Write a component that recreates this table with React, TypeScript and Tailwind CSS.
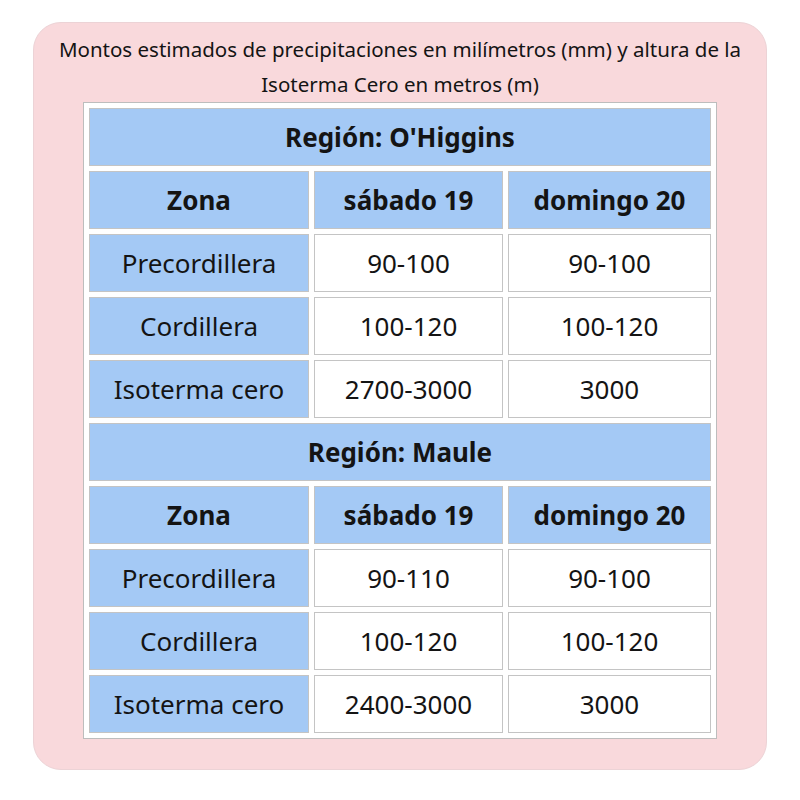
const regions = [
  {
    name: "O'Higgins",
    rows: [
      ['Precordillera', '90-100', '90-100'],
      ['Cordillera', '100-120', '100-120'],
      ['Isoterma cero', '2700-3000', '3000'],
    ],
  },
  {
    name: 'Maule',
    rows: [
      ['Precordillera', '90-110', '90-100'],
      ['Cordillera', '100-120', '100-120'],
      ['Isoterma cero', '2400-3000', '3000'],
    ],
  },
]

const cell = 'h-[58px] border border-[#c4c4c4] p-0 text-center align-middle'

export default function App() {
  return (
    <div className="min-h-[800px] w-[800px] bg-white pt-[22px] font-['Noto_Sans',sans-serif] text-[#141414]">
      <div className="mx-[33px] h-[748px] rounded-[28px] border border-[#ecd3d6] bg-[#f9d9dc] px-[49px] pt-[9px]">
        <p className="-mx-[40px] text-center text-[20.5px] leading-[35px]">
          Montos estimados de precipitaciones en milímetros (mm) y altura de la
          <br />
          Isoterma Cero en metros (m)
        </p>
        <table className="w-[634px] table-fixed border-separate border-spacing-[5px] border border-[#bdbdbd] bg-white">
          <colgroup>
            <col className="w-[220px]" />
            <col className="w-[189px]" />
            <col className="w-[203px]" />
          </colgroup>
          <tbody>
            {regions.map((region) => (
              <RegionRows key={region.name} name={region.name} rows={region.rows} />
            ))}
          </tbody>
        </table>
      </div>
    </div>
  )
}

function RegionRows({ name, rows }: { name: string; rows: string[][] }) {
  return (
    <>
      <tr>
        <th colSpan={3} className={`${cell} bg-[#a4c9f5] text-[26px] font-bold`}>
          Región: {name}
        </th>
      </tr>
      <tr>
        {['Zona', 'sábado 19', 'domingo 20'].map((h) => (
          <th key={h} className={`${cell} bg-[#a4c9f5] text-[26px] font-bold`}>
            {h}
          </th>
        ))}
      </tr>
      {rows.map(([zona, sab, dom]) => (
        <tr key={zona}>
          <td className={`${cell} bg-[#a4c9f5] text-[26px]`}>{zona}</td>
          <td className={`${cell} bg-white text-[26px]`}>{sab}</td>
          <td className={`${cell} bg-white text-[26px]`}>{dom}</td>
        </tr>
      ))}
    </>
  )
}
